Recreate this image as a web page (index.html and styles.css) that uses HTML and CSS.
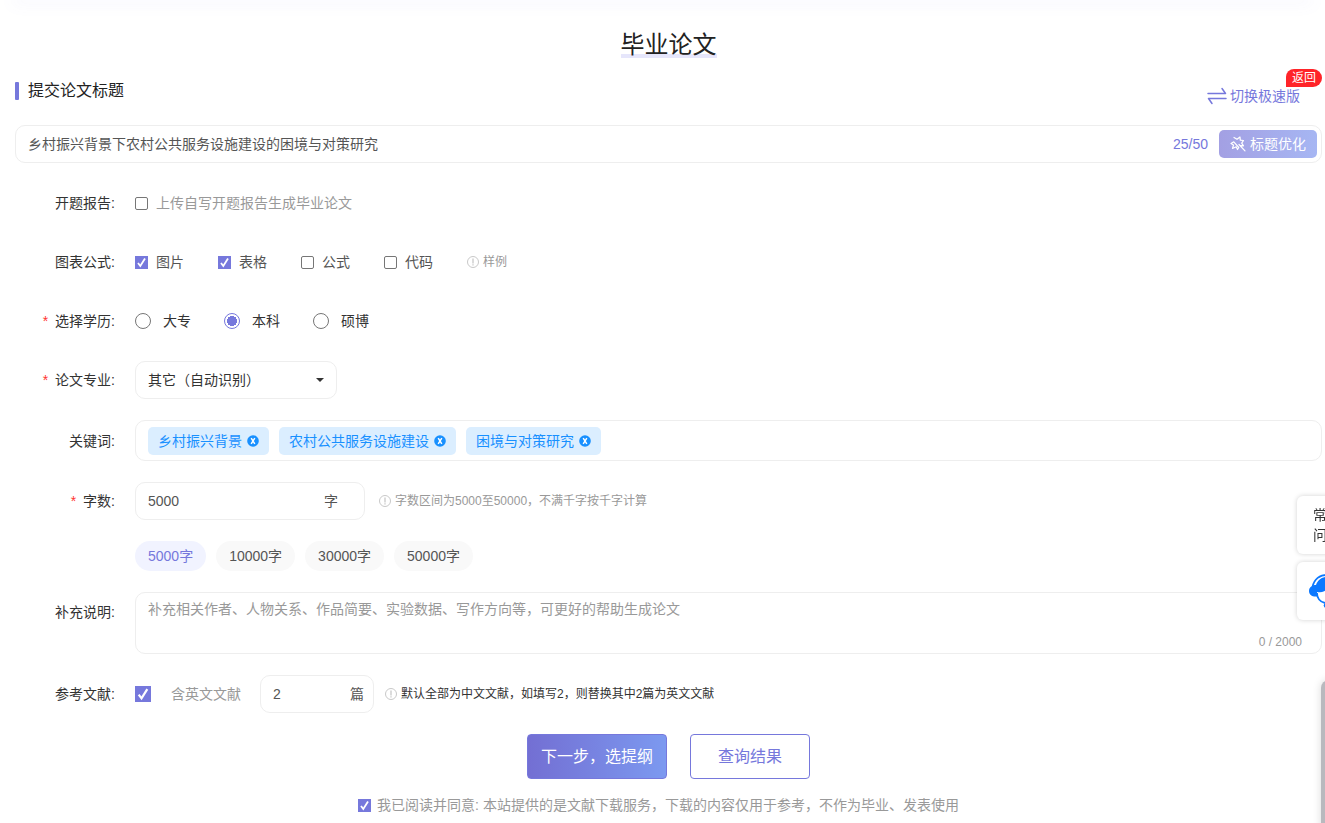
FILE: index.html
```html
<!DOCTYPE html>
<html lang="zh-CN">
<head>
<meta charset="utf-8">
<meta name="viewport" content="width=device-width, initial-scale=1">
<title>毕业论文</title>
<link rel="stylesheet" href="styles.css">
</head>
<body>
<svg class="sprite" aria-hidden="true">
  <symbol id="icon-info" viewBox="0 0 12 12">
    <circle cx="6" cy="6" r="5.5" fill="none" stroke="currentColor" stroke-width="1"/>
    <path d="M6 2.500v5M6 8.300v1.200" stroke="currentColor" stroke-width="1.300"/>
  </symbol>
  <symbol id="icon-close" viewBox="0 0 12 12">
    <circle cx="6" cy="6" r="5.800" fill="currentColor"/>
    <path d="M4.200 3.200l3.600 5.600M7.800 3.200L4.200 8.800" stroke="#fff" stroke-width="1.500"/>
  </symbol>
</svg>
<div class="top-edge"></div>
<main class="page">
  <h1 class="title"><span class="title-text">毕业论文</span></h1>

  <div class="section-head">
    <h2 class="section-name">提交论文标题</h2>
    <a class="switch-link" href="#fast">
      <svg class="switch-icon" viewBox="0 0 20 18" fill="none" stroke="currentColor" stroke-width="1.500" stroke-linecap="round" stroke-linejoin="round"><path d="M1 6.500h17.500L15 1.500M19 11.500H1.500L5 16.500"/></svg>
      <span>切换极速版</span>
    </a>
    <a class="back-badge" href="#back">返回</a>
  </div>

  <div class="box title-box">
    <input class="text-input title-input" type="text" aria-label="论文标题" value="乡村振兴背景下农村公共服务设施建设的困境与对策研究">
    <span class="title-count">25/50</span>
    <button class="optimize" type="button">
      <svg class="optimize-icon" viewBox="0 0 16 16" fill="none" stroke="currentColor" stroke-width="1.200" stroke-linejoin="round" stroke-linecap="round"><path d="M4 1.500l3 1.800L10 1l.3 3.200 3.200.3-1.800 2.700 1.800 2.600-3-.2M8.800 11.500L7.500 13.500l-1.300-2.700-3.700 1.700 1-3.500L1 7.500l2.800-1.700zM9 8.500l6 6.300"/></svg>
      <span>标题优化</span>
    </button>
  </div>

  <form class="form">
    <div class="row">
      <span class="label">开题报告:</span>
      <label class="choice muted"><input class="tick" type="checkbox">上传自写开题报告生成毕业论文</label>
    </div>

    <div class="row">
      <span class="label">图表公式:</span>
      <div class="choices">
        <label class="choice"><input class="tick" type="checkbox" checked>图片</label>
        <label class="choice"><input class="tick" type="checkbox" checked>表格</label>
        <label class="choice"><input class="tick" type="checkbox">公式</label>
        <label class="choice"><input class="tick" type="checkbox">代码</label>
        <a class="hint" href="#sample"><svg class="info-icon"><use href="#icon-info"/></svg>样例</a>
      </div>
    </div>

    <div class="row">
      <span class="label required">选择学历:</span>
      <div class="choices">
        <label class="choice degree"><input class="dot" type="radio" name="degree">大专</label>
        <label class="choice degree"><input class="dot" type="radio" name="degree" checked>本科</label>
        <label class="choice degree"><input class="dot" type="radio" name="degree">硕博</label>
      </div>
    </div>

    <div class="row">
      <label class="label required" for="major">论文专业:</label>
      <div class="select-wrap">
        <select class="box select" id="major"><option>其它（自动识别）</option></select>
        <svg class="caret" viewBox="0 0 8 4"><path d="M0 0h8L4 4z" fill="currentColor"/></svg>
      </div>
    </div>

    <div class="row">
      <span class="label">关键词:</span>
      <div class="box tags">
        <span class="tag">乡村振兴背景<button class="tag-close" type="button" aria-label="删除"><svg class="close-icon"><use href="#icon-close"/></svg></button></span>
        <span class="tag">农村公共服务设施建设<button class="tag-close" type="button" aria-label="删除"><svg class="close-icon"><use href="#icon-close"/></svg></button></span>
        <span class="tag">困境与对策研究<button class="tag-close" type="button" aria-label="删除"><svg class="close-icon"><use href="#icon-close"/></svg></button></span>
      </div>
    </div>

    <div class="row">
      <label class="label required" for="words">字数:</label>
      <div class="box words-box">
        <input class="text-input" id="words" type="text" value="5000">
        <span>字</span>
      </div>
      <span class="hint words-hint"><svg class="info-icon"><use href="#icon-info"/></svg>字数区间为5000至50000，不满千字按千字计算</span>
    </div>

    <div class="row">
      <span class="label"></span>
      <div class="chips">
        <button class="chip active" type="button">5000字</button>
        <button class="chip" type="button">10000字</button>
        <button class="chip" type="button">30000字</button>
        <button class="chip" type="button">50000字</button>
      </div>
    </div>

    <div class="row row-top">
      <label class="label" for="notes">补充说明:</label>
      <div class="notes-wrap">
        <textarea class="box notes" id="notes" placeholder="补充相关作者、人物关系、作品简要、实验数据、写作方向等，可更好的帮助生成论文"></textarea>
        <span class="notes-count">0 / 2000</span>
      </div>
    </div>

    <div class="row">
      <span class="label">参考文献:</span>
      <label class="choice english muted"><input class="tick tick-large" type="checkbox" checked>含英文文献</label>
      <div class="box refs-box">
        <input class="text-input" type="text" aria-label="英文文献篇数" value="2">
        <span>篇</span>
      </div>
      <span class="hint refs-hint"><svg class="info-icon"><use href="#icon-info"/></svg>默认全部为中文文献，如填写2，则替换其中2篇为英文文献</span>
    </div>

    <div class="actions">
      <button class="action primary" type="button">下一步，选提纲</button>
      <button class="action secondary" type="button">查询结果</button>
    </div>
  </form>

  <label class="choice agree muted"><input class="tick" type="checkbox" checked><span>我已阅读并同意: 本站提供的是文献下载服务，下载的内容仅用于参考，不作为毕业、发表使用</span></label>
</main>

<aside class="rail">
  <a class="rail-item" href="#faq">常见<br>问题</a>
  <a class="rail-item" href="#service" aria-label="客服">
    <svg class="service-icon" viewBox="0 0 36 36">
      <path d="M3.500 14C5 6 11 1.800 18 1.800S31 6 32.500 14" fill="none" stroke="#0b78ff" stroke-width="1.800"/>
      <path d="M7 12C9 6.500 13 4 18 4s9 2.500 11 8c4 0 7 2 7 5.500S33 23 29 23l-1-5c-4 0-7-1-9-3-3 4-7 5-11 4l0 4.500C3 24 0 21.500 0 18c0-3.500 3-6 7-6z" fill="#0b78ff"/>
      <path d="M8 20c0 5 3 9 8 10" fill="none" stroke="#0b78ff" stroke-width="1.800"/>
      <circle cx="17" cy="32.500" r="2.300" fill="#0b78ff"/>
    </svg>
  </a>
</aside>
<div class="drawer"></div>
</body>
</html>
```
FILE: styles.css
```css
* {
  box-sizing: border-box;
}

body {
  margin: 0;
  background: #fff;
  color: #333;
  font: 14px/20px "Liberation Sans", "Noto Sans CJK SC", sans-serif;
}

a {
  color: inherit;
  text-decoration: none;
}

button,
input,
select,
textarea {
  margin: 0;
  font: inherit;
  color: inherit;
}

button {
  cursor: pointer;
}

.sprite {
  position: absolute;
  width: 0;
  height: 0;
}

.top-edge {
  margin: 0 15px;
  box-shadow: 0 0 16px 3px rgba(120, 120, 230, 0.09);
}

.page {
  padding: 30px 3px 8px 15px;
}

.title {
  margin: 0 0 21px;
  text-align: center;
  font-size: 24px;
  font-weight: 400;
  line-height: 30px;
  color: #222;
}

.title-text {
  display: inline-block;
  background: linear-gradient(#e6e6fb, #e6e6fb) 0 24px / 100% 4px no-repeat;
}

.section-head {
  position: relative;
  display: flex;
  justify-content: space-between;
  align-items: flex-start;
  margin-bottom: 19px;
}

.section-name {
  display: flex;
  align-items: center;
  gap: 9px;
  margin: 0;
  font-size: 16px;
  font-weight: 400;
  line-height: 20px;
  color: #222;
}

.section-name::before {
  content: "";
  width: 4px;
  height: 18px;
  border-radius: 1px;
  background: #7678dc;
}

.switch-link {
  display: flex;
  align-items: center;
  gap: 3px;
  padding: 5px 22px 0 0;
  color: #7678dc;
}

.switch-icon {
  width: 20px;
  height: 18px;
}

.back-badge {
  position: absolute;
  top: -12px;
  right: 0;
  padding: 0 6px;
  border-radius: 8px 9px 9px 0;
  background: #ff2429;
  color: #fff;
  font-size: 12px;
  line-height: 18px;
}

.box {
  border: 1px solid #eee;
  border-radius: 10px;
  background: #fff;
}

.text-input {
  flex: 1;
  min-width: 0;
  padding: 0;
  border: 0;
  outline: 0;
  background: transparent;
  color: #555;
}

.title-box {
  display: flex;
  align-items: center;
  height: 38px;
  margin-bottom: 21px;
  padding: 0 4px 0 12px;
}

.title-count {
  margin-right: 11px;
  color: #7678dc;
}

.optimize {
  display: flex;
  align-items: center;
  justify-content: center;
  gap: 4px;
  width: 98px;
  height: 28px;
  padding: 0;
  border: 0;
  border-radius: 5px;
  background: linear-gradient(90deg, #a3a0e3, #a6b6f3);
  color: #fff;
}

.optimize-icon {
  width: 16px;
  height: 16px;
}

.form {
  display: flex;
  flex-direction: column;
  gap: 21px;
}

.row {
  display: flex;
  align-items: center;
}

.row > .choice,
.choices {
  min-height: 38px;
}

.label {
  flex: none;
  width: 100px;
  margin-right: 20px;
  text-align: right;
}

.required::before {
  content: "*";
  margin-right: 7px;
  color: #f33;
}

.choices {
  display: flex;
  align-items: center;
  gap: 34px;
}

.choice {
  display: flex;
  align-items: center;
  gap: 8px;
  color: #555;
}

.degree {
  gap: 12px;
  color: #333;
}

.muted {
  color: #999;
}

.tick {
  flex: none;
  appearance: none;
  width: 13px;
  height: 13px;
  border: 1px solid #767676;
  border-radius: 2px;
  background: #fff;
}

.tick-large {
  width: 16px;
  height: 16px;
}

.tick:checked {
  border: 0;
  border-radius: 0;
  background: #7678dc url("data:image/svg+xml,%3Csvg xmlns='http://www.w3.org/2000/svg' viewBox='0 0 13 13'%3E%3Cpath d='M3 7l2.300 3L10 2.500' fill='none' stroke='white' stroke-width='1.800'/%3E%3C/svg%3E") center / 100% no-repeat;
}

.dot {
  flex: none;
  appearance: none;
  width: 16px;
  height: 16px;
  border: 1px solid #767676;
  border-radius: 50%;
  background: #fff;
}

.dot:checked {
  border-color: #7678dc;
  background: radial-gradient(circle, #7678dc 5px, #fff 5px);
}

.degree + .degree {
  margin-left: -1px;
}

.hint {
  display: flex;
  align-items: center;
  gap: 4px;
  color: #999;
  font-size: 12px;
}

.info-icon {
  flex: none;
  width: 12px;
  height: 12px;
  color: #c8c8c8;
}

.select-wrap {
  position: relative;
  width: 202px;
}

.select {
  display: block;
  appearance: none;
  width: 100%;
  height: 38px;
  padding: 0 32px 0 12px;
}

.caret {
  position: absolute;
  top: 17px;
  right: 13px;
  width: 8px;
  height: 4px;
  pointer-events: none;
}

.tags {
  flex: 1;
  display: flex;
  flex-wrap: wrap;
  gap: 10px;
  padding: 6px 12px 5px;
}

.tag {
  display: flex;
  align-items: center;
  gap: 5px;
  padding: 0 10px;
  border-radius: 5px;
  background: #dbeeff;
  color: #1890ff;
  line-height: 28px;
}

.tag-close {
  display: flex;
  padding: 0;
  border: 0;
  background: none;
}

.close-icon {
  width: 12px;
  height: 12px;
}

.words-box,
.refs-box {
  display: flex;
  align-items: center;
  height: 38px;
  color: #555;
}

.words-box {
  width: 230px;
  padding: 0 26px 0 12px;
}

.words-hint {
  margin-left: 14px;
}

.chips {
  display: flex;
  gap: 10px;
}

.chip {
  padding: 0 13px;
  border: 0;
  border-radius: 15px;
  background: #f9f9f9;
  color: #555;
  line-height: 30px;
}

.chip.active {
  background: #f1f3ff;
  color: #7678dc;
}

.row-top {
  align-items: flex-start;
}

.row-top .label {
  padding-top: 10px;
}

.notes-wrap {
  position: relative;
  flex: 1;
}

.notes {
  display: block;
  width: 100%;
  height: 62px;
  padding: 6px 12px;
  resize: none;
}

.notes::placeholder {
  color: #999;
}

.notes-count {
  position: absolute;
  right: 20px;
  bottom: 2px;
  color: #999;
  font-size: 12px;
}

.english {
  gap: 20px;
}

.refs-box {
  width: 114px;
  margin-left: 19px;
  padding: 0 9px 0 12px;
}

.refs-hint {
  margin-left: 11px;
  color: #333;
}

.actions {
  display: flex;
  justify-content: center;
  gap: 23px;
}

.action {
  height: 45px;
  border: 1px solid #7678dc;
  border-radius: 4px;
  font-size: 16px;
}

.primary {
  padding: 0 13px;
  background: linear-gradient(90deg, #736fd3, #7c99f0);
  color: #fff;
}

.secondary {
  width: 120px;
  background: #fff;
  color: #7678dc;
}

.agree {
  justify-content: center;
  gap: 6px;
  margin-top: 16px;
  padding-right: 20px;
}

.rail {
  position: fixed;
  top: 496px;
  right: -32px;
  display: flex;
  flex-direction: column;
  gap: 8px;
}

.rail-item {
  display: flex;
  align-items: center;
  justify-content: center;
  width: 60px;
  height: 58px;
  border-radius: 6px;
  background: #fff;
  box-shadow: 0 0 5px rgba(0, 0, 0, 0.18);
}

.service-icon {
  width: 36px;
  height: 36px;
}

.drawer {
  position: fixed;
  top: 680px;
  right: -16px;
  bottom: -10px;
  width: 20px;
  border-radius: 8px;
  background: #b9b9be;
  box-shadow: 0 0 8px rgba(0, 0, 0, 0.15);
}
```
